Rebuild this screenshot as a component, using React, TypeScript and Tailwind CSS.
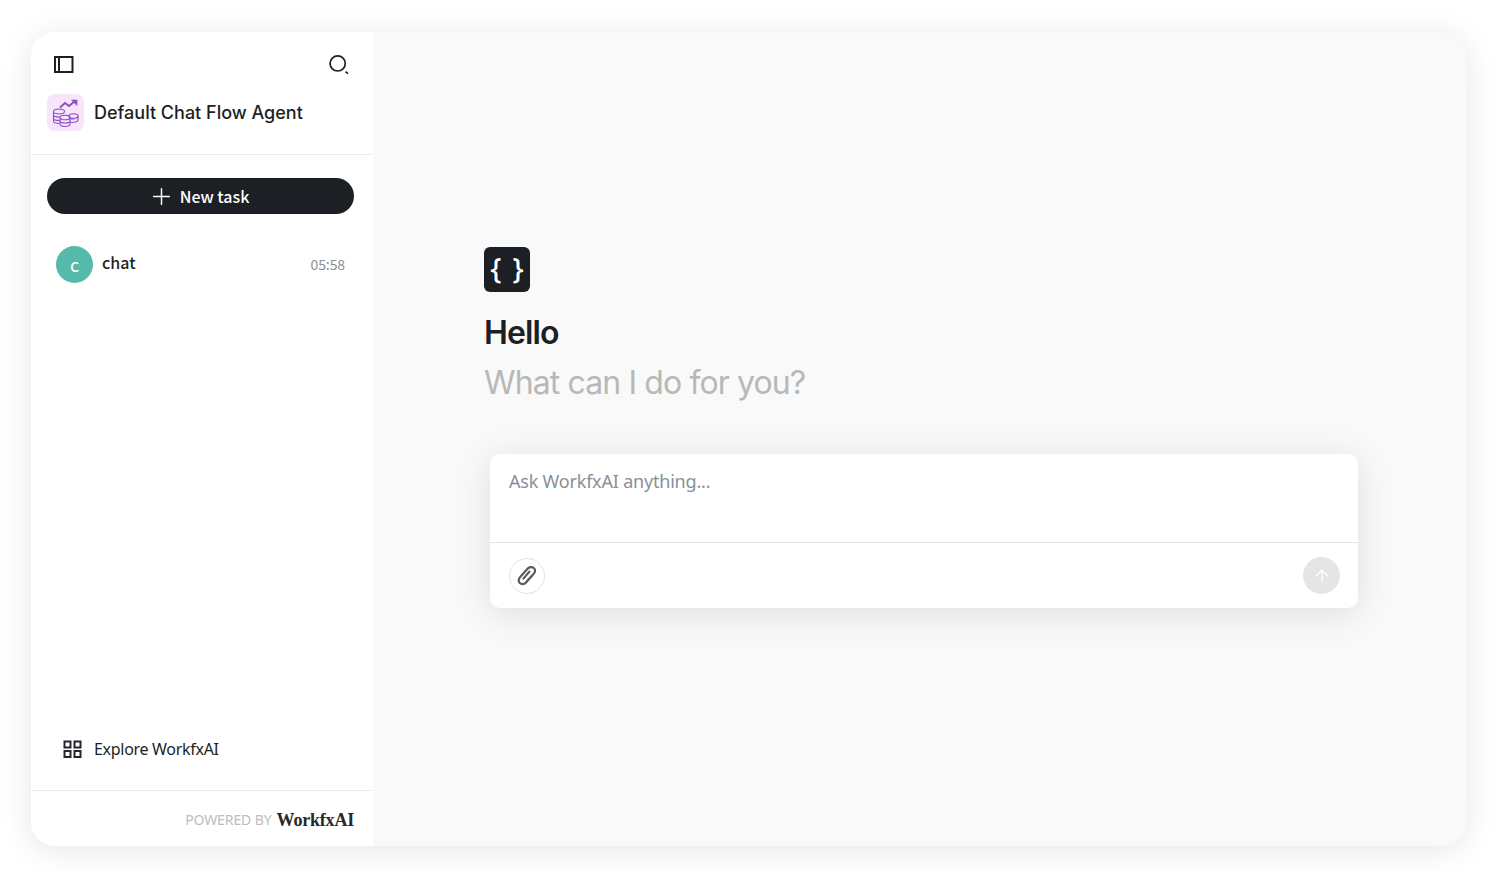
import React from "react";
import { ArrowUp, Plus } from "lucide-react";

const noto = { fontFamily: '"Noto Sans", sans-serif' };
const cjk = { fontFamily: '"Noto Sans CJK SC", "Noto Sans", sans-serif' };

const AgentLogo = () => (
  <svg width="30" height="30" viewBox="0 0 30 30" fill="none" stroke="#8e4bc4" strokeWidth="1.1">
    <path d="M9 9.5 L14 5 L18 8 L24 3" strokeWidth="1.8" />
    <path d="M20.5 2 H26 V7.5 Z" fill="#8e4bc4" strokeWidth="0.6" />
    <ellipse cx="8" cy="13.5" rx="5.5" ry="2.5" />
    <path d="M2.5 13.5 V23 C2.5 24.5 5 25.5 8.5 25.5" />
    <path d="M2.5 17 C2.5 18.5 5 19 8.5 19 M2.5 20.5 C2.5 22 5 22.5 8.5 22.5" />
    <ellipse cx="14" cy="19.5" rx="5" ry="2.3" />
    <path d="M9 19.5 V26 C9 27.5 11 28.5 14 28.5 C17 28.5 19 27.5 19 26 V19.5" />
    <path d="M9 23 C9 24.5 11 25 14 25 C17 25 19 24.5 19 23" />
    <ellipse cx="22.5" cy="18" rx="4.5" ry="2.3" />
    <path d="M27 18 V22 C27 23.5 24.5 24.5 19.5 24.5 M19.5 21 H23.5" />
  </svg>
);

export default function App() {
  return (
    <div className="h-[874px] w-[1494px] bg-white pt-[32px] pr-[28px] pb-[28px] pl-[31px]">
      <div className="flex h-full overflow-hidden rounded-[24px] bg-[#f9f9f9] shadow-[0_4px_32px_rgba(0,0,0,0.1)]">
        <aside className="flex w-[342px] shrink-0 flex-col bg-white">
          <div className="flex h-[123px] flex-col border-b border-[#ececec]">
            <div className="flex items-center justify-between pt-[22px] pr-[24px] pl-[22px]">
              <svg width="21" height="21" viewBox="0 0 21 21" fill="none" stroke="#1c1f23" strokeWidth="2">
                <rect x="2" y="3" width="17.5" height="15" />
                <path d="M6 3 V18" />
              </svg>
              <svg width="21" height="21" viewBox="0 0 21 21" fill="none" stroke="#1c1f23">
                <circle cx="9.7" cy="9.4" r="7.6" strokeWidth="1.7" />
                <path d="M17.5 17.6 L20 19.6" strokeWidth="1.8" />
              </svg>
            </div>
            <div className="mt-[19px] flex items-center gap-[10px] pl-[16px]">
              <div className="flex h-[37px] w-[37px] items-center justify-center rounded-[8px] bg-[#f6e5fb]">
                <AgentLogo />
              </div>
              <span
                className="text-[18px] leading-[24px] font-medium text-[#1c1f23]"
                style={{ fontFamily: "Inter, sans-serif" }}
              >
                Default Chat Flow Agent
              </span>
            </div>
          </div>

          <div className="flex flex-1 flex-col pt-[23px] pr-[19px] pl-[16px]">
            <button
              className="flex h-[36px] w-[307px] items-center justify-center gap-[5px] rounded-full bg-[#1c1f23] pr-[4px] text-[16px] font-medium text-white"
              style={cjk}
            >
              <Plus size={27} strokeWidth={1.3} className="mt-[1px]" />
              New task
            </button>
            <div className="mt-[32px] flex items-center px-[9px]" style={cjk}>
              <div className="flex h-[37px] w-[37px] items-center justify-center rounded-full bg-[#56baab] text-[18px] text-white">
                c
              </div>
              <span className="-mt-[5px] ml-[9px] flex-1 text-[16px] font-medium text-[#1c1f23]">chat</span>
              <span className="text-[14px] tracking-[-0.1px] text-[#8a8f96]">05:58</span>
            </div>
            <div className="mt-auto mb-[29px] flex items-center gap-[12px] pl-[16px]" style={noto}>
              <svg width="19" height="19" viewBox="0 0 19 19" fill="none" stroke="#23262a" strokeWidth="2">
                <rect x="1.5" y="1.5" width="6" height="6" />
                <rect x="11.5" y="1.5" width="6" height="6" />
                <rect x="1.5" y="11" width="6" height="6" />
                <rect x="11.5" y="11" width="6" height="6" />
              </svg>
              <span className="text-[16px] tracking-[-0.3px] text-[#1c1f23]">Explore WorkfxAI</span>
            </div>
          </div>

          <div className="flex h-[56px] items-center justify-end border-t border-[#ececec] pt-[2px] pr-[19px]">
            <span className="text-[14px] tracking-[-0.1px] text-[#bdbdbd]" style={noto}>
              POWERED BY
            </span>
            <span
              className="mt-[1px] ml-[5px] text-[18px] font-bold tracking-[-0.2px] text-[#26282c]"
              style={{ fontFamily: '"Liberation Serif", serif' }}
            >
              WorkfxAI
            </span>
          </div>
        </aside>

        <main className="flex-1 pt-[215px] pl-[111px]" style={{ fontFamily: "Inter, sans-serif" }}>
          <div
            className="flex h-[45px] w-[46px] items-center justify-center gap-[11px] rounded-[6px] bg-[#1c1f23] pb-[3px] text-[29px] font-medium text-white"
            style={noto}
          >
            <span>{"{"}</span>
            <span>{"}"}</span>
          </div>
          <h1 className="mt-[21px] text-[32px] leading-[40px] font-semibold tracking-[-0.9px] text-[#1c1f23]">Hello</h1>
          <p className="mt-[10px] text-[32px] leading-[40px] tracking-[-0.88px] text-[#b8b8b8]">What can I do for you?</p>

          <div
            className="mt-[51px] ml-[6px] w-[868px] overflow-hidden rounded-[10px] bg-white shadow-[0_6px_36px_rgba(0,0,0,0.11)]"
            style={noto}
          >
            <div className="h-[89px] border-b border-[#e5e5e5] px-[19px] pt-[14px] text-[18px] leading-[26px] tracking-[-0.2px] text-[#8a8f96]">
              Ask WorkfxAI anything...
            </div>
            <div className="flex h-[65px] items-center justify-between pr-[18px] pl-[19px]">
              <button className="flex h-[36px] w-[36px] items-center justify-center rounded-full border border-[#e2e2e2]">
                <svg width="20" height="22" viewBox="0 0 20 22" fill="none" stroke="#5a5a5a" strokeWidth="2.1" strokeLinecap="round">
                  <path d="M15.8 10 L9 17.5 C7.2 19.5 4.3 19.6 2.8 18 C1.3 16.4 1.5 14 3.2 12 L10.5 3.8 C12.3 1.8 15.2 1.6 16.8 3.1 C18.4 4.6 18.2 7 16.5 9 L9.2 17" />
                  <path d="M12.5 6.5 L6.4 13.6" />
                </svg>
              </button>
              <button className="flex h-[37px] w-[37px] items-center justify-center rounded-full bg-[#e5e5e5] text-white">
                <ArrowUp size={20} strokeWidth={1.6} />
              </button>
            </div>
          </div>
        </main>
      </div>
    </div>
  );
}
